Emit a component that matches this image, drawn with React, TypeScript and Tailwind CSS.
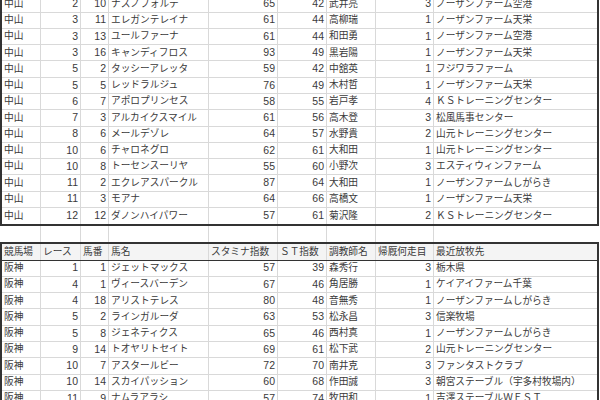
const nakayama = [
  ["中山", "2", "10", "ナスノフォルテ", "65", "42", "武井亮", "3", "ノーザンファーム空港"],
  ["中山", "3", "11", "エレガンテレイナ", "61", "44", "高柳瑞", "1", "ノーザンファーム天栄"],
  ["中山", "3", "13", "ユールファーナ", "61", "44", "和田勇", "1", "ノーザンファーム空港"],
  ["中山", "3", "16", "キャンディフロス", "93", "49", "黒岩陽", "1", "ノーザンファーム天栄"],
  ["中山", "5", "2", "タッシーアレッタ", "59", "42", "中舘英", "1", "フジワラファーム"],
  ["中山", "5", "5", "レッドラルジュ", "76", "49", "木村哲", "1", "ノーザンファーム天栄"],
  ["中山", "6", "7", "アポロプリンセス", "58", "55", "岩戸孝", "4", "ＫＳトレーニングセンター"],
  ["中山", "7", "3", "アルカイクスマイル", "61", "56", "高木登", "3", "松風馬事センター"],
  ["中山", "8", "6", "メールデゾレ", "64", "57", "水野貴", "2", "山元トレーニングセンター"],
  ["中山", "10", "6", "チャロネグロ", "62", "61", "大和田", "1", "山元トレーニングセンター"],
  ["中山", "10", "8", "トーセンスーリヤ", "55", "60", "小野次", "3", "エスティウィンファーム"],
  ["中山", "11", "2", "エクレアスパークル", "87", "64", "大和田", "1", "ノーザンファームしがらき"],
  ["中山", "11", "3", "モアナ", "64", "66", "高橋文", "1", "ノーザンファーム天栄"],
  ["中山", "12", "12", "ダノンハイパワー", "57", "61", "菊沢隆", "2", "ＫＳトレーニングセンター"],
];

const hanshin = [
  ["阪神", "1", "1", "ジェットマックス", "57", "39", "森秀行", "3", "栃木県"],
  ["阪神", "4", "1", "ヴィースバーデン", "67", "46", "角居勝", "1", "ケイアイファーム千葉"],
  ["阪神", "4", "18", "アリストテレス", "80", "48", "音無秀", "1", "ノーザンファームしがらき"],
  ["阪神", "5", "2", "ラインガルーダ", "63", "53", "松永昌", "3", "信楽牧場"],
  ["阪神", "5", "8", "ジェネティクス", "65", "46", "西村真", "1", "ノーザンファームしがらき"],
  ["阪神", "9", "14", "トオヤリトセイト", "69", "61", "松下武", "2", "山元トレーニングセンター"],
  ["阪神", "10", "7", "アスタールビー", "72", "70", "南井克", "3", "ファンタストクラブ"],
  ["阪神", "10", "14", "スカイパッション", "60", "68", "作田誠", "3", "朝宮ステーブル（宇多村牧場内）"],
  ["阪神", "11", "9", "ナムラアラシ", "57", "74", "牧田和", "1", "吉澤ステーブルＷＥＳＴ"],
];

const headers = ["競馬場", "レース", "馬番", "馬名", "スタミナ指数", "ＳＴ指数", "調教師名", "帰厩何走目", "最近放牧先"];

const numeric = [1, 2, 4, 5, 7];

function Row({ cells, header = false, last = false }: { cells: string[]; header?: boolean; last?: boolean }) {
  return (
    <div
      className={`grid grid-cols-[39px_40px_28px_100px_69px_49px_49px_58px_1fr] h-[16.28px] ${
        header ? "bg-[#f4f4f4] border-b border-[#333]" : ""
      }`}
    >
      {cells.map((c, i) => {
        const num = !header && numeric.includes(i);
        return (
          <div
            key={i}
            className={`flex items-center overflow-hidden whitespace-nowrap text-[#3a3a3a] ${
              i < 8 ? "border-r border-[#d9d9d9]" : ""
            } ${!last && !header ? "border-b border-[#d9d9d9]" : ""} ${
              num ? "justify-end pr-[2px] text-[10.5px]" : "pl-[2px] text-[9.7px]"
            }`}
          >
            {c}
          </div>
        );
      })}
    </div>
  );
}

export default function App() {
  const blank = ["", "", "", "", "", "", "", "", ""];
  return (
    <div className="w-[600px] h-[400px] overflow-hidden bg-white font-['Liberation_Sans','Noto_Sans_CJK_JP',sans-serif]">
      <div className="-mt-[3.58px] w-[599px]">
        <div className="border-x-2 border-b-2 border-[#333]">
          {nakayama.map((r, i) => (
            <Row key={i} cells={r} last={i === nakayama.length - 1} />
          ))}
        </div>
        <div className="pl-[2px] pr-[2px]">
          <Row cells={blank} last />
        </div>
        <div className="border-x-2 border-t-2 border-[#333]">
          <Row cells={headers} header />
          {hanshin.map((r, i) => (
            <Row key={i} cells={r} />
          ))}
        </div>
      </div>
    </div>
  );
}
